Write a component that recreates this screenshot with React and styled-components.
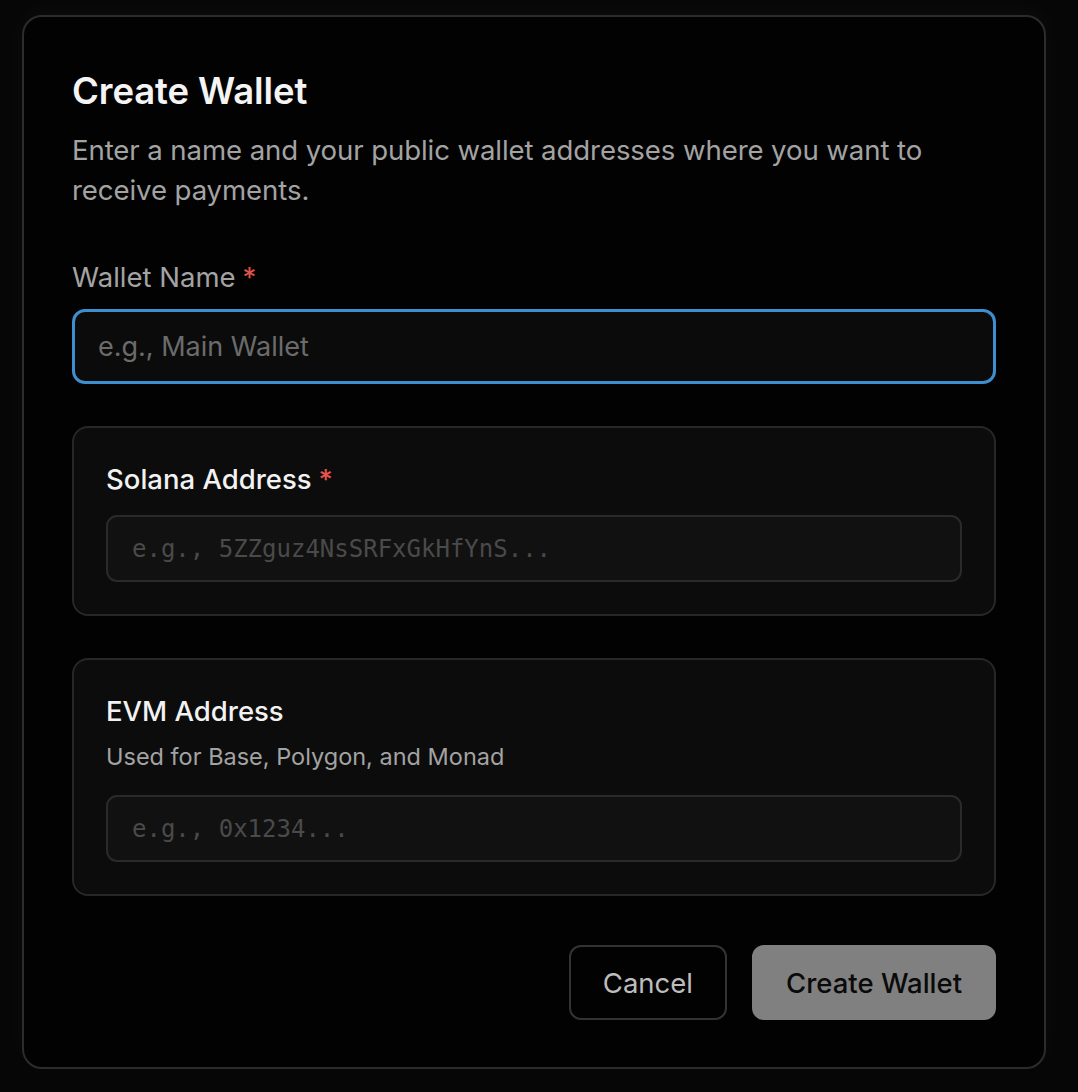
import React from 'react';
import styled, { createGlobalStyle } from 'styled-components';

const color = {
  page: '#060606',
  dialog: '#020202',
  border: '#2c2c2c',
  card: '#0c0c0c',
  cardBorder: '#272727',
  field: '#111111',
  focus: '#3d8fd0',
  muted: '#a3a3a3',
  required: '#e5534b',
};

const GlobalStyle = createGlobalStyle`
  html, body {
    margin: 0;
    padding: 0;
    background: ${color.page};
    font-family: Inter, "Noto Sans", sans-serif;
    color: #f2f2f2;
  }
  * { box-sizing: border-box; }
`;

const Page = styled.div`
  padding: 15px 32px 23px 22px;
`;

const Dialog = styled.div`
  width: 1024px;
  height: 1054px;
  background: ${color.dialog};
  border: 2px solid ${color.border};
  border-radius: 20px;
  padding: 50px 48px 47px;
  display: flex;
  flex-direction: column;
  box-shadow: 0 -6px 24px rgba(255, 255, 255, 0.03);
`;

const Title = styled.h2`
  margin: 0;
  font-size: 36.5px;
  line-height: 48px;
  font-weight: 600;
  letter-spacing: -0.1px;
  color: #f4f4f4;
`;

const Description = styled.p`
  margin: 15px 0 0;
  font-size: 27.6px;
  line-height: 40px;
  color: ${color.muted};
  letter-spacing: -0.1px;
`;

const Label = styled.label`
  display: block;
  margin-top: ${p => p.$top || 0}px;
  font-size: 27.5px;
  line-height: 40px;
  color: ${color.muted};
`;

const Required = styled.span`
  color: ${color.required};
  margin-left: 7px;
`;

const NameInput = styled.input`
  display: block;
  width: 100%;
  height: 75px;
  margin-top: 12px;
  padding: 0 23px;
  background: #0b0b0b;
  border: 3px solid ${color.focus};
  border-radius: 13px;
  font-family: inherit;
  font-size: 27px;
  color: #eee;
  outline: none;
  caret-color: #ddd;
  &::placeholder { color: #6b6b6b; }
`;

const Card = styled.div`
  margin-top: 42px;
  background: ${color.card};
  border: 2px solid ${color.cardBorder};
  border-radius: 16px;
  padding: 31px 32px 32px;
  display: flex;
  flex-direction: column;
`;

const CardLabel = styled.div`
  font-size: 27.5px;
  line-height: 40px;
  font-weight: 500;
  color: #f2f2f2;
`;

const CardHint = styled.div`
  margin-top: 10px;
  font-size: 23.5px;
  line-height: 32px;
  color: ${color.muted};
`;

const AddressInput = styled.input`
  display: block;
  width: 100%;
  height: 67px;
  margin-top: ${p => p.$top}px;
  padding: 0 24px;
  background: ${color.field};
  border: 2px solid #2a2a2a;
  border-radius: 11px;
  font-family: "DejaVu Sans Mono", "Liberation Mono", monospace;
  font-size: 24px;
  color: #ddd;
  outline: none;
  &::placeholder { color: #4a4a4a; }
`;

const Footer = styled.div`
  margin-top: 49px;
  display: flex;
  justify-content: flex-end;
  gap: 25px;
`;

const Button = styled.button`
  height: 75px;
  padding: 0 32px;
  border-radius: 12px;
  font-family: inherit;
  font-size: 27.5px;
  cursor: pointer;
  border: 2px solid ${p => (p.$primary ? '#808080' : '#333')};
  background: ${p => (p.$primary ? '#808080' : 'transparent')};
  color: ${p => (p.$primary ? '#0a0a0a' : '#bdbdbd')};
  font-weight: ${p => (p.$primary ? 500 : 400)};
`;

export default function App() {
  return (
    <>
      <GlobalStyle />
      <Page>
        <Dialog>
          <Title>Create Wallet</Title>
          <Description>
            Enter a name and your public wallet addresses where you want to receive payments.
          </Description>

          <Label $top={47}>
            Wallet Name<Required>*</Required>
          </Label>
          <NameInput placeholder="e.g., Main Wallet" autoFocus />

          <Card>
            <CardLabel>
              Solana Address<Required>*</Required>
            </CardLabel>
            <AddressInput $top={16} placeholder="e.g., 5ZZguz4NsSRFxGkHfYnS..." />
          </Card>

          <Card>
            <CardLabel>EVM Address</CardLabel>
            <CardHint>Used for Base, Polygon, and Monad</CardHint>
            <AddressInput $top={22} placeholder="e.g., 0x1234..." />
          </Card>

          <Footer>
            <Button>Cancel</Button>
            <Button $primary>Create Wallet</Button>
          </Footer>
        </Dialog>
      </Page>
    </>
  );
}
